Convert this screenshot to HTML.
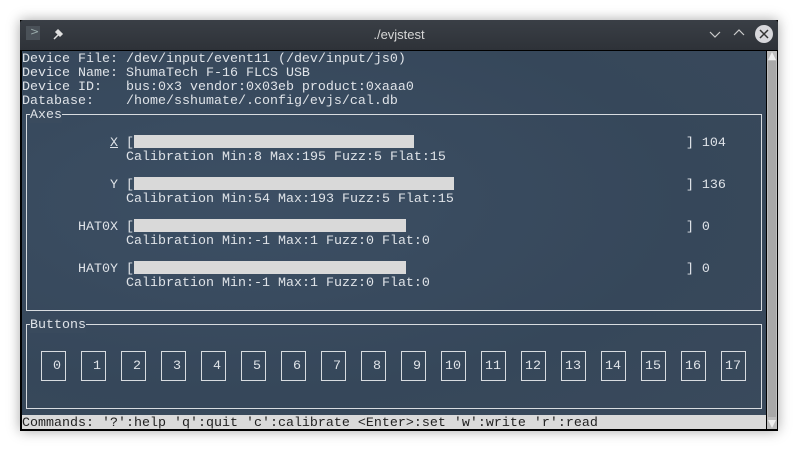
<!DOCTYPE html>
<html><head><meta charset="utf-8"><style>
body{margin:0;width:798px;height:451px;background:#fff;position:relative;overflow:hidden;font-family:"Liberation Mono","DejaVu Sans Mono",monospace;}
#win{position:absolute;left:20px;top:20px;width:758px;height:411px;background:#000;box-shadow:0 0 12px rgba(0,0,0,.35);}
#tb{position:absolute;left:0;top:0;width:758px;height:30px;background:linear-gradient(#3a3f46,#2e3238);border-radius:3px 3px 0 0;}
#tb .t{position:absolute;left:0;right:0;top:7px;text-align:center;color:#d6d6d6;font:13px "Liberation Sans",sans-serif;}
#term{position:absolute;left:2px;top:31px;width:744px;height:378px;background:radial-gradient(ellipse at 30% 40%,#3c4f64,#36475a 60%,#3a4a5c);overflow:hidden;}
.a{position:absolute;font-size:13.33px;line-height:14px;color:#dfe3e8;white-space:pre;transform:translateY(2px);}
.bx{position:absolute;border:1px solid #d8dce0;}
.bar{position:absolute;background:#d9d9d9;height:13px;}
.btn{position:absolute;width:23px;height:28px;border:1px solid #d8dce0;top:300px;color:#dfe3e8;font-size:13.33px;line-height:30px;text-align:right;}
.btn span{position:absolute;right:4px;}
#cmd{position:absolute;left:0;top:364px;width:744px;height:14px;background:#dadada;}
#sb{position:absolute;left:747px;top:31px;width:10px;height:378px;background:#bdbdbd;}
</style></head><body>
<div id="win">
<div id="tb">
<div style="position:absolute;left:6px;top:6px;width:14px;height:14px;background:#4a5158;"></div>
<div style="position:absolute;left:10px;top:5px;color:#9aa;font:11px 'DejaVu Sans',sans-serif;">&gt;</div>
<svg style="position:absolute;left:32px;top:8px" width="12" height="12" viewBox="0 0 12 12"><path d="M2 11 L6 7 M4 4 L8 8 M6 2 L10 6 L8 8 L4 4 Z" stroke="#e0e0e0" stroke-width="1.5" fill="#e0e0e0"/></svg>
<div class="t">./evjstest</div>
<svg style="position:absolute;left:689px;top:10px" width="12" height="10"><path d="M1 2 L6 7 L11 2" stroke="#ccc" fill="none" stroke-width="1.2"/></svg>
<svg style="position:absolute;left:713px;top:8px" width="12" height="10"><path d="M1 7 L6 2 L11 7" stroke="#ccc" fill="none" stroke-width="1.2"/></svg>
<div style="position:absolute;left:735px;top:5px;width:18px;height:18px;border-radius:50%;background:#d8d8dc;"></div>
<svg style="position:absolute;left:739px;top:9px" width="10" height="10"><path d="M1 1 L9 9 M9 1 L1 9" stroke="#333" stroke-width="1.5"/></svg>
</div>
<div id="term">
<div class="a" style="left:0;top:0">Device File: /dev/input/event11 (/dev/input/js0)
Device Name: ShumaTech F-16 FLCS USB
Device ID:   bus:0x3 vendor:0x03eb product:0xaaa0
Database:    /home/sshumate/.config/evjs/cal.db</div>
<div class="bx" style="left:4px;top:63px;width:734px;height:195px;"></div>
<div class="a" style="left:8px;top:56px;background:#3a4b5e">Axes</div>
<div class="a" style="left:88px;top:84px"><u>X</u> [                                                                     ] 104</div>
<div class="bar" style="left:112px;top:84px;width:280px"></div>
<div class="a" style="left:104px;top:98px">Calibration Min:8 Max:195 Fuzz:5 Flat:15</div>
<div class="a" style="left:88px;top:126px">Y [                                                                     ] 136</div>
<div class="bar" style="left:112px;top:126px;width:320px"></div>
<div class="a" style="left:104px;top:140px">Calibration Min:54 Max:193 Fuzz:5 Flat:15</div>
<div class="a" style="left:56px;top:168px">HAT0X [                                                                     ] 0</div>
<div class="bar" style="left:112px;top:168px;width:272px"></div>
<div class="a" style="left:104px;top:182px">Calibration Min:-1 Max:1 Fuzz:0 Flat:0</div>
<div class="a" style="left:56px;top:210px">HAT0Y [                                                                     ] 0</div>
<div class="bar" style="left:112px;top:210px;width:272px"></div>
<div class="a" style="left:104px;top:224px">Calibration Min:-1 Max:1 Fuzz:0 Flat:0</div>
<div class="bx" style="left:4px;top:273px;width:734px;height:83px;"></div>
<div class="a" style="left:8px;top:266px;background:#394a5d">Buttons</div>
<div class="btn" style="left:19px"><span>0</span></div>
<div class="btn" style="left:59px"><span>1</span></div>
<div class="btn" style="left:99px"><span>2</span></div>
<div class="btn" style="left:139px"><span>3</span></div>
<div class="btn" style="left:179px"><span>4</span></div>
<div class="btn" style="left:219px"><span>5</span></div>
<div class="btn" style="left:259px"><span>6</span></div>
<div class="btn" style="left:299px"><span>7</span></div>
<div class="btn" style="left:339px"><span>8</span></div>
<div class="btn" style="left:379px"><span>9</span></div>
<div class="btn" style="left:419px"><span>10</span></div>
<div class="btn" style="left:459px"><span>11</span></div>
<div class="btn" style="left:499px"><span>12</span></div>
<div class="btn" style="left:539px"><span>13</span></div>
<div class="btn" style="left:579px"><span>14</span></div>
<div class="btn" style="left:619px"><span>15</span></div>
<div class="btn" style="left:659px"><span>16</span></div>
<div class="btn" style="left:699px"><span>17</span></div>
<div id="cmd"></div>
<div class="a" style="left:0;top:364px;color:#222">Commands: '?':help 'q':quit 'c':calibrate &lt;Enter&gt;:set 'w':write 'r':read</div>
</div>
<div id="sb">
<svg style="position:absolute;left:0;top:0" width="10" height="10"><path d="M5 1 L9 9 L1 9Z" fill="#eee"/></svg>
<div style="position:absolute;left:1px;top:10px;width:8px;height:356px;background:#a8a8a8;"></div>
<svg style="position:absolute;left:0;bottom:0" width="10" height="10"><path d="M1 1 L9 1 L5 9Z" fill="#eee"/></svg>
</div>
</div>
</body></html>
